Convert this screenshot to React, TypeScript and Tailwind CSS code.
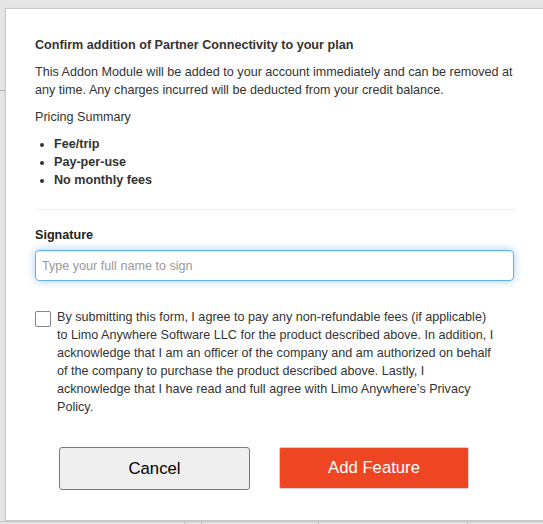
import { useState } from 'react';

const bullets = ['Fee/trip', 'Pay-per-use', 'No monthly fees'];

export default function App() {
    const [name, setName] = useState('');
    const [agreed, setAgreed] = useState(false);

    return (
        <div className="flex h-[524px] w-[543px] flex-col overflow-hidden bg-[#e6e6e6] pt-[8px] font-['Liberation_Sans',Arial,sans-serif] text-[#333]">
            <div className="flex">
                {/* edge of the page behind the modal */}
                <div className="w-[5px] shrink-0 pt-[82px]">
                    <div className="h-px bg-[#b8b8b8]" />
                </div>

                <div className="h-[513px] w-[560px] shrink-0 border border-[#c8c8c8] bg-white pl-[29px] pt-[27px] shadow-[0_1px_3px_rgba(0,0,0,0.08)]">
                    <div className="w-[479px] text-[12.6px] leading-[18px]">
                        <h4 className="font-bold">Confirm addition of Partner Connectivity to your plan</h4>
                        <p className="mt-[9px]">
                            This Addon Module will be added to your account immediately and can be removed at any time. Any charges incurred will be deducted from your credit balance.
                        </p>
                        <p className="mt-[9px]">Pricing Summary</p>
                        <ul className="mt-[9px] list-disc pl-[19px] font-bold">
                            {bullets.map((b) => (
                                <li key={b}>{b}</li>
                            ))}
                        </ul>

                        <hr className="mt-[20px] border-t border-[#eeeeee]" />

                        <label className="mt-[16px] block font-bold text-[#222]">Signature</label>
                        <input
                            value={name}
                            onChange={(e) => setName(e.target.value)}
                            placeholder="Type your full name to sign"
                            className="mt-[6px] block h-[31px] w-full rounded-[4px] border border-[#66afe9] px-[6px] text-[12.6px] text-[#555] shadow-[inset_0_1px_1px_rgba(0,0,0,0.075),0_0_8px_rgba(102,175,233,0.6)] outline-none placeholder:text-[#999]"
                        />

                        <label className="mt-[27px] flex items-start">
                            <input
                                type="checkbox"
                                checked={agreed}
                                onChange={(e) => setAgreed(e.target.checked)}
                                className="mt-[3px] h-[16px] w-[16px] shrink-0 appearance-none rounded-[2px] border border-[#858585] bg-white checked:bg-[#0075ff]"
                            />
                            <span className="ml-[6px] w-[437px]">
                                By submitting this form, I agree to pay any non-refundable fees (if applicable) to Limo Anywhere Software LLC for the product described above. In addition, I acknowledge that I am an officer of the company and am authorized on behalf of the company to purchase the product described above. Lastly, I acknowledge that I have read and full agree with Limo Anywhere’s Privacy Policy.
                            </span>
                        </label>
                    </div>

                    <div className="ml-[24px] mt-[31px] flex gap-[29px]">
                        <button className="h-[43px] w-[191px] rounded-[3px] border border-[#7a7a7a] bg-[#efefef] text-[16.7px] text-black">
                            Cancel
                        </button>
                        <button className="h-[42px] w-[190px] rounded-[2px] border border-[#d0d0d0] bg-[#ee4523] text-[16.7px] text-white">
                            Add Feature
                        </button>
                    </div>
                </div>
            </div>

            {/* table header peeking out under the modal */}
            <div className="flex h-[3px] border-t border-[#c6c6c6]">
                <div className="w-[185px] border-r border-[#c0c0c0]" />
                <div className="w-[17px] border-r border-[#c0c0c0]" />
                <div className="w-[117px] border-r border-[#c0c0c0]" />
                <div className="w-[149px] border-r border-[#c0c0c0]" />
                <div className="flex-1" />
            </div>
        </div>
    );
}
